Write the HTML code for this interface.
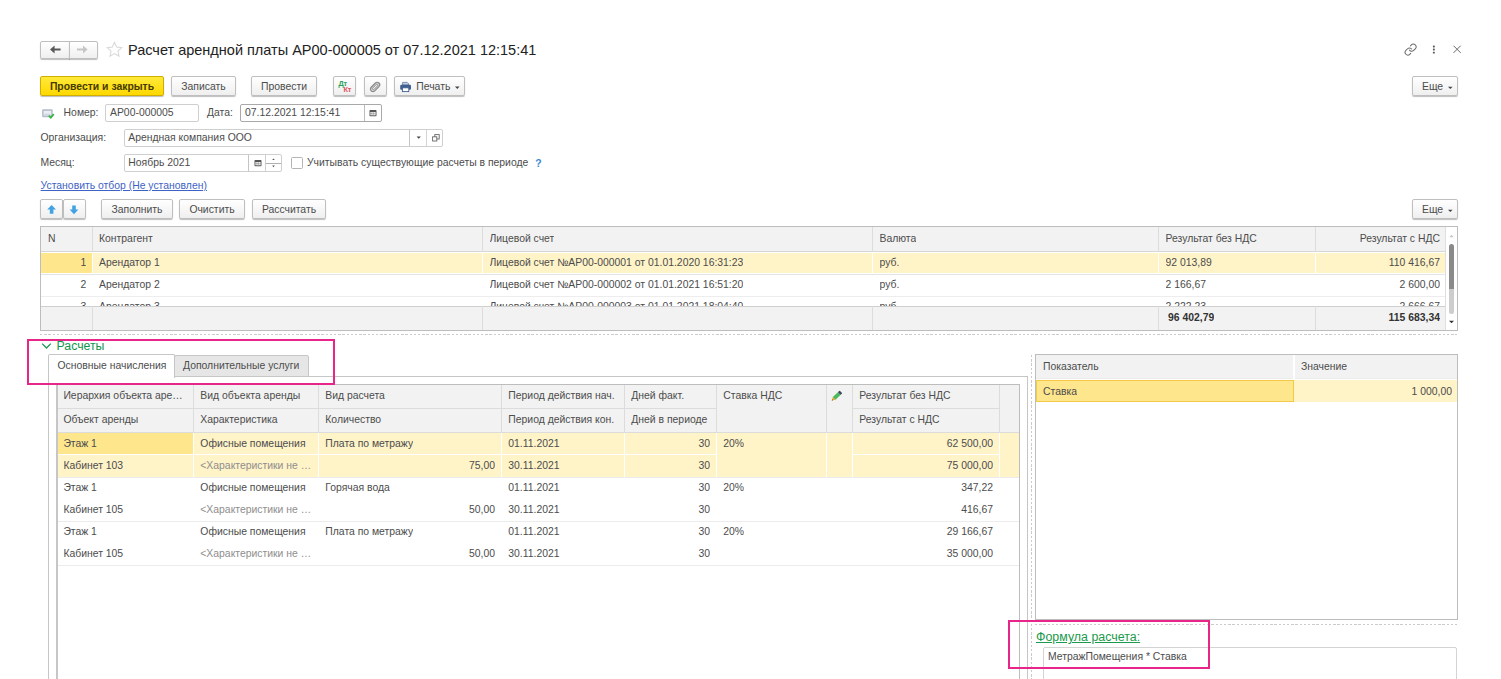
<!DOCTYPE html>
<html lang="ru">
<head>
<meta charset="utf-8">
<title>Расчет арендной платы</title>
<style>
*{box-sizing:border-box;margin:0;padding:0}
html,body{width:1501px;height:679px;overflow:hidden;background:#fff}
body{font-family:"Liberation Sans",sans-serif;font-size:10.4px;color:#4c4c4c;position:relative}
.a{position:absolute;white-space:nowrap}
.btn{position:absolute;border:1px solid #bfbfbf;border-radius:2px;background:linear-gradient(#ffffff,#efefef);box-shadow:0 1px 1px rgba(0,0,0,.26);text-align:center;white-space:nowrap;color:#4c4c4c}
.btn.y{background:linear-gradient(#ffe93a,#ffd800);border-color:#cfae00;font-weight:bold;color:#453a00}
.inp{position:absolute;border:1px solid #cfcfcf;border-radius:2px;background:#fff;white-space:nowrap;overflow:hidden}
.lbl{position:absolute;white-space:nowrap;color:#4c4c4c}
.tbl{position:absolute;border:1px solid #bdbdbd;background:#fff;overflow:hidden}
.c{position:absolute;white-space:nowrap;overflow:hidden}
.hd{background:#f2f2f2}
.vl{position:absolute;width:1px;background:#dcdcdc}
.hl{position:absolute;height:1px;background:#e4e4e4}
.r{text-align:right}
.dash{background:repeating-linear-gradient(90deg,#cbcbcb 0 2.4px,transparent 2.4px 4.2px)}
.vdash{background:repeating-linear-gradient(180deg,#cbcbcb 0 2.4px,transparent 2.4px 4.2px)}
</style>
</head>
<body>
<!-- HEADER -->
<div id="hdr">
  <div class="btn" style="left:40px;top:41px;width:30px;height:18px;border-radius:2px 0 0 2px"></div>
  <div class="btn" style="left:69px;top:41px;width:29px;height:18px;border-radius:0 2px 2px 0"></div>
  <svg class="a" style="left:40px;top:41px" width="58" height="18" viewBox="0 0 58 18">
    <path d="M10 8.5l4.6-4v2.9h6v2.2h-6v2.9z" fill="#5a5a5a"/>
    <path d="M47.6 8.5l-4.6-4v2.9h-6v2.2h6v2.9z" fill="#c6c6c6"/>
  </svg>
  <svg class="a" style="left:105.6px;top:41.2px" width="17" height="17" viewBox="0 0 16 16"><path d="M8 1.3l2 4.4 4.8.55-3.55 3.25.95 4.75L8 11.85 3.8 14.25l.95-4.75L1.2 6.25 6 5.7z" fill="none" stroke="#d8d8d8" stroke-width="1"/></svg>
  <div class="a" id="title" style="left:128px;top:42px;font-size:14.5px;line-height:17px;color:#222">Расчет арендной платы АР00-000005 от 07.12.2021 12:15:41</div>
</div>

<!-- TOP RIGHT ICONS -->
<svg class="a" style="left:1403.5px;top:43.3px" width="13.2" height="13.2" viewBox="0 0 24 24">
  <g fill="none" stroke="#6c6c6c" stroke-width="1.9" stroke-linecap="round" stroke-linejoin="round">
    <path d="M10 13a5 5 0 0 0 7.54.54l3-3a5 5 0 0 0-7.07-7.07l-1.72 1.71"/>
    <path d="M14 11a5 5 0 0 0-7.54-.54l-3 3a5 5 0 0 0 7.07 7.07l1.71-1.71"/>
  </g>
</svg>
<svg class="a" style="left:1430px;top:43px" width="36" height="14" viewBox="0 0 36 14">
  <g fill="#5a5a5a"><rect x="2.9" y="2.5" width="1.9" height="1.9" rx=".4"/><rect x="2.9" y="5.6" width="1.9" height="1.9" rx=".4"/><rect x="2.9" y="8.7" width="1.9" height="1.9" rx=".4"/></g>
  <path d="M23.5 2.7l7.2 7.2M30.7 2.7l-7.2 7.2" stroke="#6a6a6a" stroke-width="1" fill="none"/>
</svg>

<!-- COMMAND BAR -->
<div class="btn y" style="left:40px;top:76px;width:124px;height:20px;line-height:19px">Провести и закрыть</div>
<div class="btn" style="left:171px;top:76px;width:65px;height:20px;line-height:19px">Записать</div>
<div class="btn" style="left:251px;top:76px;width:66px;height:20px;line-height:19px">Провести</div>
<div class="btn" style="left:333px;top:76px;width:23px;height:20px"></div>
<div class="a" style="left:338.5px;top:80px;font-size:7.4px;font-weight:bold;line-height:8px;color:#2ea25a;letter-spacing:-.2px">Дт</div>
<div class="a" style="left:343.5px;top:85.5px;font-size:7.4px;font-weight:bold;line-height:8px;color:#e4525c;letter-spacing:-.2px">Кт</div>
<div class="btn" style="left:364px;top:76px;width:23px;height:20px"></div>
<svg class="a" style="left:368px;top:79.5px" width="14" height="14" viewBox="0 0 14 14"><g transform="rotate(45 7 7)" fill="none" stroke="#8a8a8a"><rect x="4.5" y="1.4" width="5" height="11" rx="2.5" stroke-width="1.2" fill="#d4d4d4"/><rect x="6.1" y="3.6" width="1.9" height="6.6" rx=".95" stroke-width=".9" fill="#ededed"/></g></svg>
<div class="btn" style="left:394px;top:76px;width:71px;height:20px;line-height:19px;text-align:left;padding-left:21.3px">Печать</div>
<svg class="a" style="left:399px;top:80.5px" width="14" height="12" viewBox="0 0 14 12">
  <path d="M3.6 4V1.4h4.6l1.4 1.4V4z" fill="#c4d2e4" stroke="#5c7aa6" stroke-width=".8"/>
  <rect x="1.2" y="3.8" width="10.8" height="5" rx="1.2" fill="#3f5f8f"/>
  <rect x="3.4" y="6.8" width="6.4" height="3.8" fill="#fff" stroke="#3f5f8f" stroke-width=".9"/>
</svg>
<svg class="a" style="left:454px;top:86px" width="7" height="4" viewBox="0 0 7 4"><path d="M1 .6h4.6L3.3 2.9z" fill="#444"/></svg>
<div class="btn" style="left:1412px;top:76px;width:46px;height:20px;line-height:19px;text-align:left;padding-left:9px">Еще</div>
<svg class="a" style="left:1447px;top:86px" width="7" height="4" viewBox="0 0 7 4"><path d="M1 .8h4.6L3.3 3z" fill="#444"/></svg>

<!-- ROW: Номер / Дата -->
<svg class="a" style="left:41px;top:108px" width="15" height="12" viewBox="0 0 15 12">
  <rect x="1.1" y="1.3" width="10.6" height="8" rx="1.2" fill="#b3bdcd"/>
  <rect x="2.6" y="2.9" width="7.6" height="4.6" fill="#eceef2"/>
  <path d="M3.4 6.2h6" stroke="#c9d0dc" stroke-width="1"/>
  <path d="M7.8 7.6l2 2 3-3.4" stroke="#3cb54a" stroke-width="1.9" fill="none"/>
</svg>
<div class="lbl" style="left:63.6px;top:107px;line-height:12px">Номер:</div>
<div class="inp" style="left:105px;top:104px;width:94px;height:18px;line-height:16px;padding-left:4px">АР00-000005</div>
<div class="lbl" style="left:207px;top:107px;line-height:12px">Дата:</div>
<div class="inp" style="left:240px;top:104px;width:142px;height:18px;line-height:16px;padding-left:4px;border-color:#a9a9a9">07.12.2021 12:15:41</div>
<div class="vl" style="left:364px;top:105px;height:16px;background:#bdbdbd"></div>
<svg class="a cal" style="left:369px;top:108.8px" width="8" height="8" viewBox="0 0 8 8"><rect x=".5" y="1" width="7" height="6.2" rx=".8" fill="#555"/><rect x="1.4" y="3" width="5.2" height="3.3" fill="#f4f4f4"/><path d="M2.9 3v3.3M4.6 3v3.3M1.4 4.6h5.2" stroke="#888" stroke-width=".5"/></svg>

<!-- ROW: Организация -->
<div class="lbl" style="left:40.5px;top:132px;line-height:12px">Организация:</div>
<div class="inp" style="left:124px;top:129px;width:319px;height:18px;line-height:16px;padding-left:3.3px">Арендная компания ООО</div>
<div class="vl" style="left:409px;top:130px;height:16px;background:#c4c4c4"></div>
<div class="vl" style="left:426px;top:130px;height:16px;background:#d4d4d4"></div>
<svg class="a" style="left:416px;top:136.4px" width="6" height="4" viewBox="0 0 6 4"><path d="M.6.5h4.3L2.75 2.8z" fill="#444"/></svg>
<svg class="a" style="left:431.8px;top:134px" width="8" height="8" viewBox="0 0 8 8"><rect x="2.8" y=".6" width="4.4" height="4.4" fill="#fff" stroke="#666" stroke-width=".9"/><rect x=".6" y="2.8" width="4.2" height="4.2" fill="#fff" stroke="#666" stroke-width=".9"/></svg>

<!-- ROW: Месяц -->
<div class="lbl" style="left:40.5px;top:157px;line-height:12px">Месяц:</div>
<div class="inp" style="left:124px;top:154px;width:158px;height:18px;line-height:16px;padding-left:3.3px">Ноябрь 2021</div>
<div class="vl" style="left:248px;top:155px;height:16px;background:#c4c4c4"></div>
<div class="vl" style="left:265px;top:155px;height:16px;background:#d0d0d0"></div>
<svg class="a cal" style="left:253.5px;top:158.6px" width="8" height="8" viewBox="0 0 8 8"><rect x=".5" y="1" width="7" height="6.2" rx=".8" fill="#555"/><rect x="1.4" y="3" width="5.2" height="3.3" fill="#f4f4f4"/><path d="M2.9 3v3.3M4.6 3v3.3M1.4 4.6h5.2" stroke="#888" stroke-width=".5"/></svg>
<div class="hl" style="left:266px;top:163px;width:15px;background:#b0b0b0"></div>
<svg class="a" style="left:271px;top:157px" width="5" height="12" viewBox="0 0 5 12"><path d="M1.2 3h2.6L2.5 1.4zM1.2 8.6h2.6L2.5 10.2z" fill="#555"/></svg>
<div class="a" style="left:291px;top:157px;width:12px;height:12px;border:1px solid #b4b4b4;border-radius:1.5px;background:#fff"></div>
<div class="lbl" style="left:307px;top:157px;line-height:12px">Учитывать существующие расчеты в периоде</div>
<div class="lbl" style="left:535.3px;top:157.6px;line-height:12px;color:#3a88d4;font-weight:bold">?</div>

<!-- LINK -->
<div class="lbl" style="left:40.6px;top:180px;line-height:12px;color:#3e62c6;text-decoration:underline;text-decoration-thickness:.8px">Установить отбор (Не установлен)</div>

<!-- TABLE TOOLBAR -->
<div class="btn" style="left:40px;top:199px;width:23px;height:20px"></div>
<div class="btn" style="left:63px;top:199px;width:23px;height:20px"></div>
<svg class="a" style="left:40px;top:199px" width="46" height="20" viewBox="0 0 46 20">
  <path d="M11.6 6l4.4 4.6h-2.6v4.2H9.8v-4.2H7.2z" fill="#42a2e2"/>
  <path d="M34 15.2l4.4-4.6h-2.6V6.4h-3.6v4.2h-2.6z" fill="#42a2e2"/>
</svg>
<div class="btn" style="left:101px;top:199px;width:72px;height:20px;line-height:19px">Заполнить</div>
<div class="btn" style="left:179px;top:199px;width:66px;height:20px;line-height:19px">Очистить</div>
<div class="btn" style="left:252px;top:199px;width:74px;height:20px;line-height:19px">Рассчитать</div>
<div class="btn" style="left:1412px;top:199px;width:46px;height:20px;line-height:19px;text-align:left;padding-left:9px">Еще</div>
<svg class="a" style="left:1447px;top:209px" width="7" height="4" viewBox="0 0 7 4"><path d="M1 .8h4.6L3.3 3z" fill="#444"/></svg>

<!-- MAIN TABLE -->
<div class="tbl" id="t1" style="left:40px;top:226px;width:1418px;height:105px">
  <div class="c hd" style="left:0;top:0;width:1404px;height:25px;border-bottom:1px solid #d6d6d6"></div>
  <div class="c" style="left:0;top:26px;width:1404px;height:20px;background:#fff3c8"></div>
  <div class="c" style="left:0;top:26px;width:51px;height:20px;background:#fee68c"></div>
  <div class="hl" style="left:0;top:47px;width:1404px"></div>
  <div class="hl" style="left:0;top:69px;width:1404px;background:#ededed"></div>
  <div class="c hd" style="left:0;top:79px;width:1404px;height:25px;border-top:1px solid #cfcfcf"></div>
  <div class="vl" style="left:51px;top:0;height:25px"></div><div class="vl" style="left:51px;top:79px;height:25px"></div>
  <div class="vl" style="left:441px;top:0;height:25px"></div><div class="vl" style="left:441px;top:79px;height:25px"></div>
  <div class="vl" style="left:831px;top:0;height:25px"></div><div class="vl" style="left:831px;top:79px;height:25px"></div>
  <div class="vl" style="left:1117px;top:0;height:25px"></div><div class="vl" style="left:1117px;top:79px;height:25px"></div>
  <div class="vl" style="left:1274px;top:0;height:25px"></div><div class="vl" style="left:1274px;top:79px;height:25px"></div>
  <div class="vl" style="left:51px;top:25px;height:22px;background:#fff"></div>
  <div class="vl" style="left:441px;top:25px;height:22px;background:#fff"></div>
  <div class="vl" style="left:831px;top:25px;height:22px;background:#fff"></div>
  <div class="vl" style="left:1117px;top:25px;height:22px;background:#fff"></div>
  <div class="vl" style="left:1274px;top:25px;height:22px;background:#fff"></div>
  <!-- header text -->
  <div class="c" style="left:7px;top:6px;line-height:12px">N</div>
  <div class="c" style="left:58px;top:6px;line-height:12px">Контрагент</div>
  <div class="c" style="left:448.5px;top:6px;line-height:12px">Лицевой счет</div>
  <div class="c" style="left:838.5px;top:6px;line-height:12px">Валюта</div>
  <div class="c" style="left:1124.5px;top:6px;line-height:12px">Результат без НДС</div>
  <div class="c r" style="left:1275px;top:6px;width:124px;line-height:12px">Результат с НДС</div>
  <!-- row 1 -->
  <div class="c r" style="left:0;top:30px;width:45.4px;line-height:12px">1</div>
  <div class="c" style="left:58px;top:30px;line-height:12px">Арендатор 1</div>
  <div class="c" style="left:448.5px;top:30px;line-height:12px">Лицевой счет №АР00-000001 от 01.01.2020 16:31:23</div>
  <div class="c" style="left:838.5px;top:30px;line-height:12px">руб.</div>
  <div class="c" style="left:1124.5px;top:30px;line-height:12px">92 013,89</div>
  <div class="c r" style="left:1275px;top:30px;width:124px;line-height:12px">110 416,67</div>
  <!-- row 2 -->
  <div class="c r" style="left:0;top:52px;width:45.4px;line-height:12px">2</div>
  <div class="c" style="left:58px;top:52px;line-height:12px">Арендатор 2</div>
  <div class="c" style="left:448.5px;top:52px;line-height:12px">Лицевой счет №АР00-000002 от 01.01.2021 16:51:20</div>
  <div class="c" style="left:838.5px;top:52px;line-height:12px">руб.</div>
  <div class="c" style="left:1124.5px;top:52px;line-height:12px">2 166,67</div>
  <div class="c r" style="left:1275px;top:52px;width:124px;line-height:12px">2 600,00</div>
  <!-- row 3 (clipped) -->
  <div class="c" style="left:0;top:74px;width:1404px;height:5px">
    <div class="c r" style="left:0;top:0;width:45.4px;line-height:12px">3</div>
    <div class="c" style="left:58px;top:0;line-height:12px">Арендатор 3</div>
    <div class="c" style="left:448.5px;top:0;line-height:12px">Лицевой счет №АР00-000003 от 01.01.2021 18:04:40</div>
    <div class="c" style="left:838.5px;top:0;line-height:12px">руб.</div>
    <div class="c" style="left:1124.5px;top:0;line-height:12px">2 222,23</div>
    <div class="c r" style="left:1275px;top:0;width:124px;line-height:12px">2 666,67</div>
  </div>
  <!-- footer -->
  <div class="c" style="left:1127px;top:85px;line-height:12px;font-weight:bold;color:#333">96 402,79</div>
  <div class="c r" style="left:1275px;top:85px;width:124px;line-height:12px;font-weight:bold;color:#333">115 683,34</div>
  <!-- scrollbar -->
  <div class="c" style="left:1404px;top:0;width:12px;height:104px;background:#fff;border-left:1px solid #dedede"></div>
  <div class="c" style="left:1408px;top:17px;width:5.4px;height:45px;background:#8a8a8a;border-radius:2.7px 2.7px 0 0"></div>
  <div class="c" style="left:1408px;top:62px;width:5.4px;height:25px;background:#cdcdcd;border-radius:0 0 2.7px 2.7px"></div>
  <svg class="a" style="left:1407px;top:6.5px" width="7" height="4" viewBox="0 0 7 4"><path d="M1.2 3.2h4.6L3.5 .8z" fill="#c8c8c8"/></svg>
  <svg class="a" style="left:1407px;top:93px" width="7" height="4" viewBox="0 0 7 4"><path d="M1 .8h5L3.5 3.3z" fill="#333"/></svg>
</div>
<div class="a dash" style="left:40px;top:334px;width:1417px;height:1px"></div>

<!-- GROUP: Расчеты -->
<svg class="a" style="left:41px;top:342px" width="11" height="8" viewBox="0 0 11 8"><path d="M1.2 1.6l4.3 4.4 4.3-4.4" fill="none" stroke="#1a9a50" stroke-width="1.3"/></svg>
<div class="a" style="left:56.5px;top:338.7px;font-size:12.3px;line-height:14px;color:#12964c">Расчеты</div>

<!-- tab panel -->
<div class="a" style="left:48px;top:376px;width:980px;height:320px;border:1px solid #c6c6c6;border-bottom:none;background:#fff"></div>
<div class="a" style="left:174px;top:355px;width:135px;height:22px;border:1px solid #c6c6c6;border-radius:2px 2px 0 0;background:#e6e6e6;line-height:20px;padding-left:8px">Дополнительные услуги</div>
<div class="a" style="left:48px;top:354px;width:127px;height:24px;border:1px solid #c6c6c6;border-bottom:none;border-radius:2px 2px 0 0;background:#fff;line-height:21px;padding-left:8.5px">Основные начисления</div>

<!-- inner table -->
<div class="tbl" id="t2" style="left:56px;top:384px;width:964px;height:320px;border-color:#bdbdbd;border-left:2px solid #c6c6c6">
<div class="c hd" style="left:0;top:0;width:961px;height:48px;border-bottom:1px solid #dcdcdc"></div>
<div class="c" style="left:0;top:48px;width:961px;height:44px;background:#fff3c8"></div>
<div class="c" style="left:0;top:48px;width:135px;height:22px;background:#fee68c"></div>
<div class="vl" style="left:135px;top:0;height:48px"></div>
<div class="vl" style="left:135px;top:48px;height:44px;background:#fff"></div>
<div class="vl" style="left:260px;top:0;height:48px"></div>
<div class="vl" style="left:260px;top:48px;height:44px;background:#fff"></div>
<div class="vl" style="left:443px;top:0;height:48px"></div>
<div class="vl" style="left:443px;top:48px;height:44px;background:#fff"></div>
<div class="vl" style="left:566px;top:0;height:48px"></div>
<div class="vl" style="left:566px;top:48px;height:44px;background:#fff"></div>
<div class="vl" style="left:658px;top:0;height:48px"></div>
<div class="vl" style="left:658px;top:48px;height:44px;background:#fff"></div>
<div class="vl" style="left:768px;top:0;height:48px"></div>
<div class="vl" style="left:768px;top:48px;height:44px;background:#fff"></div>
<div class="vl" style="left:794px;top:0;height:48px"></div>
<div class="vl" style="left:794px;top:48px;height:44px;background:#fff"></div>
<div class="vl" style="left:941px;top:0;height:48px"></div>
<div class="vl" style="left:941px;top:48px;height:44px;background:#fff"></div>
<div class="hl" style="left:0px;top:23px;width:658px;background:#dcdcdc"></div>
<div class="hl" style="left:0px;top:69px;width:658px;background:#fff"></div>
<div class="hl" style="left:794px;top:23px;width:147px;background:#dcdcdc"></div>
<div class="hl" style="left:794px;top:69px;width:147px;background:#fff"></div>
<div class="hl" style="left:0;top:92px;width:961px;background:#ececec"></div>
<div class="hl" style="left:0;top:136px;width:961px;background:#ececec"></div>
<div class="hl" style="left:0;top:180px;width:961px;background:#ececec"></div>
<div class="c" style="left:5.4px;top:4.5px;line-height:12px;width:128.6px">Иерархия объекта аре…</div>
<div class="c" style="left:142.3px;top:4.5px;line-height:12px;width:116.7px">Вид объекта аренды</div>
<div class="c" style="left:267.3px;top:4.5px;line-height:12px;width:174.7px">Вид расчета</div>
<div class="c" style="left:450.3px;top:4.5px;line-height:12px;width:114.7px">Период действия нач.</div>
<div class="c" style="left:573.3px;top:4.5px;line-height:12px;width:83.7px">Дней факт.</div>
<div class="c" style="left:665.3px;top:4.5px;line-height:12px;width:101.7px">Ставка НДС</div>
<div class="c" style="left:801.3px;top:4.5px;line-height:12px;width:138.7px">Результат без НДС</div>
<div class="c" style="left:5.4px;top:28.5px;line-height:12px;width:128.6px">Объект аренды</div>
<div class="c" style="left:142.3px;top:28.5px;line-height:12px;width:116.7px">Характеристика</div>
<div class="c" style="left:267.3px;top:28.5px;line-height:12px;width:174.7px">Количество</div>
<div class="c" style="left:450.3px;top:28.5px;line-height:12px;width:114.7px">Период действия кон.</div>
<div class="c" style="left:573.3px;top:28.5px;line-height:12px;width:83.7px">Дней в периоде</div>
<div class="c" style="left:801.3px;top:28.5px;line-height:12px;width:138.7px">Результат с НДС</div>
<svg class="a" style="left:773px;top:5px" width="13" height="13" viewBox="0 0 13 13"><g transform="translate(0.8,10.6) rotate(-43.5)"><path d="M0 0L3.2-1.9V1.9z" fill="#f0a830"/><path d="M0 0L1.2-.7V.7z" fill="#5a4020"/><rect x="3.2" y="-1.9" width="7" height="3.8" fill="#4cba5c"/><rect x="10.2" y="-1.9" width="2.4" height="3.8" rx=".6" fill="#3a4a5c"/></g></svg>
<div class="c" style="left:5.4px;top:52.8px;line-height:12px">Этаж 1</div>
<div class="c" style="left:142.3px;top:52.8px;line-height:12px;width:116.7px">Офисные помещения</div>
<div class="c" style="left:267.3px;top:52.8px;line-height:12px">Плата по метражу</div>
<div class="c" style="left:450.3px;top:52.8px;line-height:12px">01.11.2021</div>
<div class="c r" style="left:566px;top:52.8px;line-height:12px;width:86px">30</div>
<div class="c" style="left:665.3px;top:52.8px;line-height:12px">20%</div>
<div class="c r" style="left:794px;top:52.8px;line-height:12px;width:141px">62 500,00</div>
<div class="c" style="left:5.4px;top:75.3px;line-height:12px">Кабинет 103</div>
<div class="c" style="left:142.3px;top:75.3px;line-height:12px;width:116.7px;color:#8e8e8e">&lt;Характеристики не …</div>
<div class="c r" style="left:260px;top:75.3px;line-height:12px;width:177px">75,00</div>
<div class="c" style="left:450.3px;top:75.3px;line-height:12px">30.11.2021</div>
<div class="c r" style="left:566px;top:75.3px;line-height:12px;width:86px">30</div>
<div class="c r" style="left:794px;top:75.3px;line-height:12px;width:141px">75 000,00</div>
<div class="c" style="left:5.4px;top:96.8px;line-height:12px">Этаж 1</div>
<div class="c" style="left:142.3px;top:96.8px;line-height:12px;width:116.7px">Офисные помещения</div>
<div class="c" style="left:267.3px;top:96.8px;line-height:12px">Горячая вода</div>
<div class="c" style="left:450.3px;top:96.8px;line-height:12px">01.11.2021</div>
<div class="c r" style="left:566px;top:96.8px;line-height:12px;width:86px">30</div>
<div class="c" style="left:665.3px;top:96.8px;line-height:12px">20%</div>
<div class="c r" style="left:794px;top:96.8px;line-height:12px;width:141px">347,22</div>
<div class="c" style="left:5.4px;top:119.3px;line-height:12px">Кабинет 105</div>
<div class="c" style="left:142.3px;top:119.3px;line-height:12px;width:116.7px;color:#8e8e8e">&lt;Характеристики не …</div>
<div class="c r" style="left:260px;top:119.3px;line-height:12px;width:177px">50,00</div>
<div class="c" style="left:450.3px;top:119.3px;line-height:12px">30.11.2021</div>
<div class="c r" style="left:566px;top:119.3px;line-height:12px;width:86px">30</div>
<div class="c r" style="left:794px;top:119.3px;line-height:12px;width:141px">416,67</div>
<div class="c" style="left:5.4px;top:140.8px;line-height:12px">Этаж 1</div>
<div class="c" style="left:142.3px;top:140.8px;line-height:12px;width:116.7px">Офисные помещения</div>
<div class="c" style="left:267.3px;top:140.8px;line-height:12px">Плата по метражу</div>
<div class="c" style="left:450.3px;top:140.8px;line-height:12px">01.11.2021</div>
<div class="c r" style="left:566px;top:140.8px;line-height:12px;width:86px">30</div>
<div class="c" style="left:665.3px;top:140.8px;line-height:12px">20%</div>
<div class="c r" style="left:794px;top:140.8px;line-height:12px;width:141px">29 166,67</div>
<div class="c" style="left:5.4px;top:163.3px;line-height:12px">Кабинет 105</div>
<div class="c" style="left:142.3px;top:163.3px;line-height:12px;width:116.7px;color:#8e8e8e">&lt;Характеристики не …</div>
<div class="c r" style="left:260px;top:163.3px;line-height:12px;width:177px">50,00</div>
<div class="c" style="left:450.3px;top:163.3px;line-height:12px">30.11.2021</div>
<div class="c r" style="left:566px;top:163.3px;line-height:12px;width:86px">30</div>
<div class="c r" style="left:794px;top:163.3px;line-height:12px;width:141px">35 000,00</div>
</div>

<!-- dotted vertical separator -->
<div class="a vdash" style="left:1031px;top:355px;width:1px;height:330px"></div>

<!-- RIGHT TABLE -->
<div class="tbl" id="t3" style="left:1035px;top:354px;width:423px;height:266px">
  <div class="c hd" style="left:0;top:0;width:421px;height:24px;border-bottom:1px solid #ececec"></div>
  <div class="vl" style="left:257px;top:0;height:24px;background:#fff;width:2px"></div>
  <div class="c" style="left:0;top:25px;width:421px;height:22px;background:#fff3c8"></div>
  <div class="c" style="left:0;top:25px;width:258px;height:22px;background:#fee68c;border:1px solid #f5c84a"></div>
  <div class="c" style="left:7px;top:6px;line-height:12px">Показатель</div>
  <div class="c" style="left:265px;top:6px;line-height:12px">Значение</div>
  <div class="c" style="left:7px;top:30.6px;line-height:12px">Ставка</div>
  <div class="c r" style="left:258px;top:30.6px;width:158px;line-height:12px">1 000,00</div>
</div>
<div class="a dash" style="left:1035px;top:624px;width:422px;height:1px"></div>

<!-- Формула -->
<div class="a" style="left:1036px;top:630.3px;font-size:12.42px;line-height:14px;color:#1b9a4c;text-decoration:underline">Формула расчета:</div>
<div class="a" style="left:1043px;top:647px;width:414px;height:50px;border:1px solid #d4d4d4;border-radius:2px;background:#fff;line-height:12px;padding:2.6px 0 0 4px">МетражПомещения * Ставка</div>

<!-- pink highlight rectangles -->
<div class="a" style="left:27px;top:339px;width:308px;height:46px;border:2px solid #e8268a"></div>
<div class="a" style="left:1008px;top:620px;width:202px;height:49px;border:2px solid #e8268a"></div>
</body>
</html>
